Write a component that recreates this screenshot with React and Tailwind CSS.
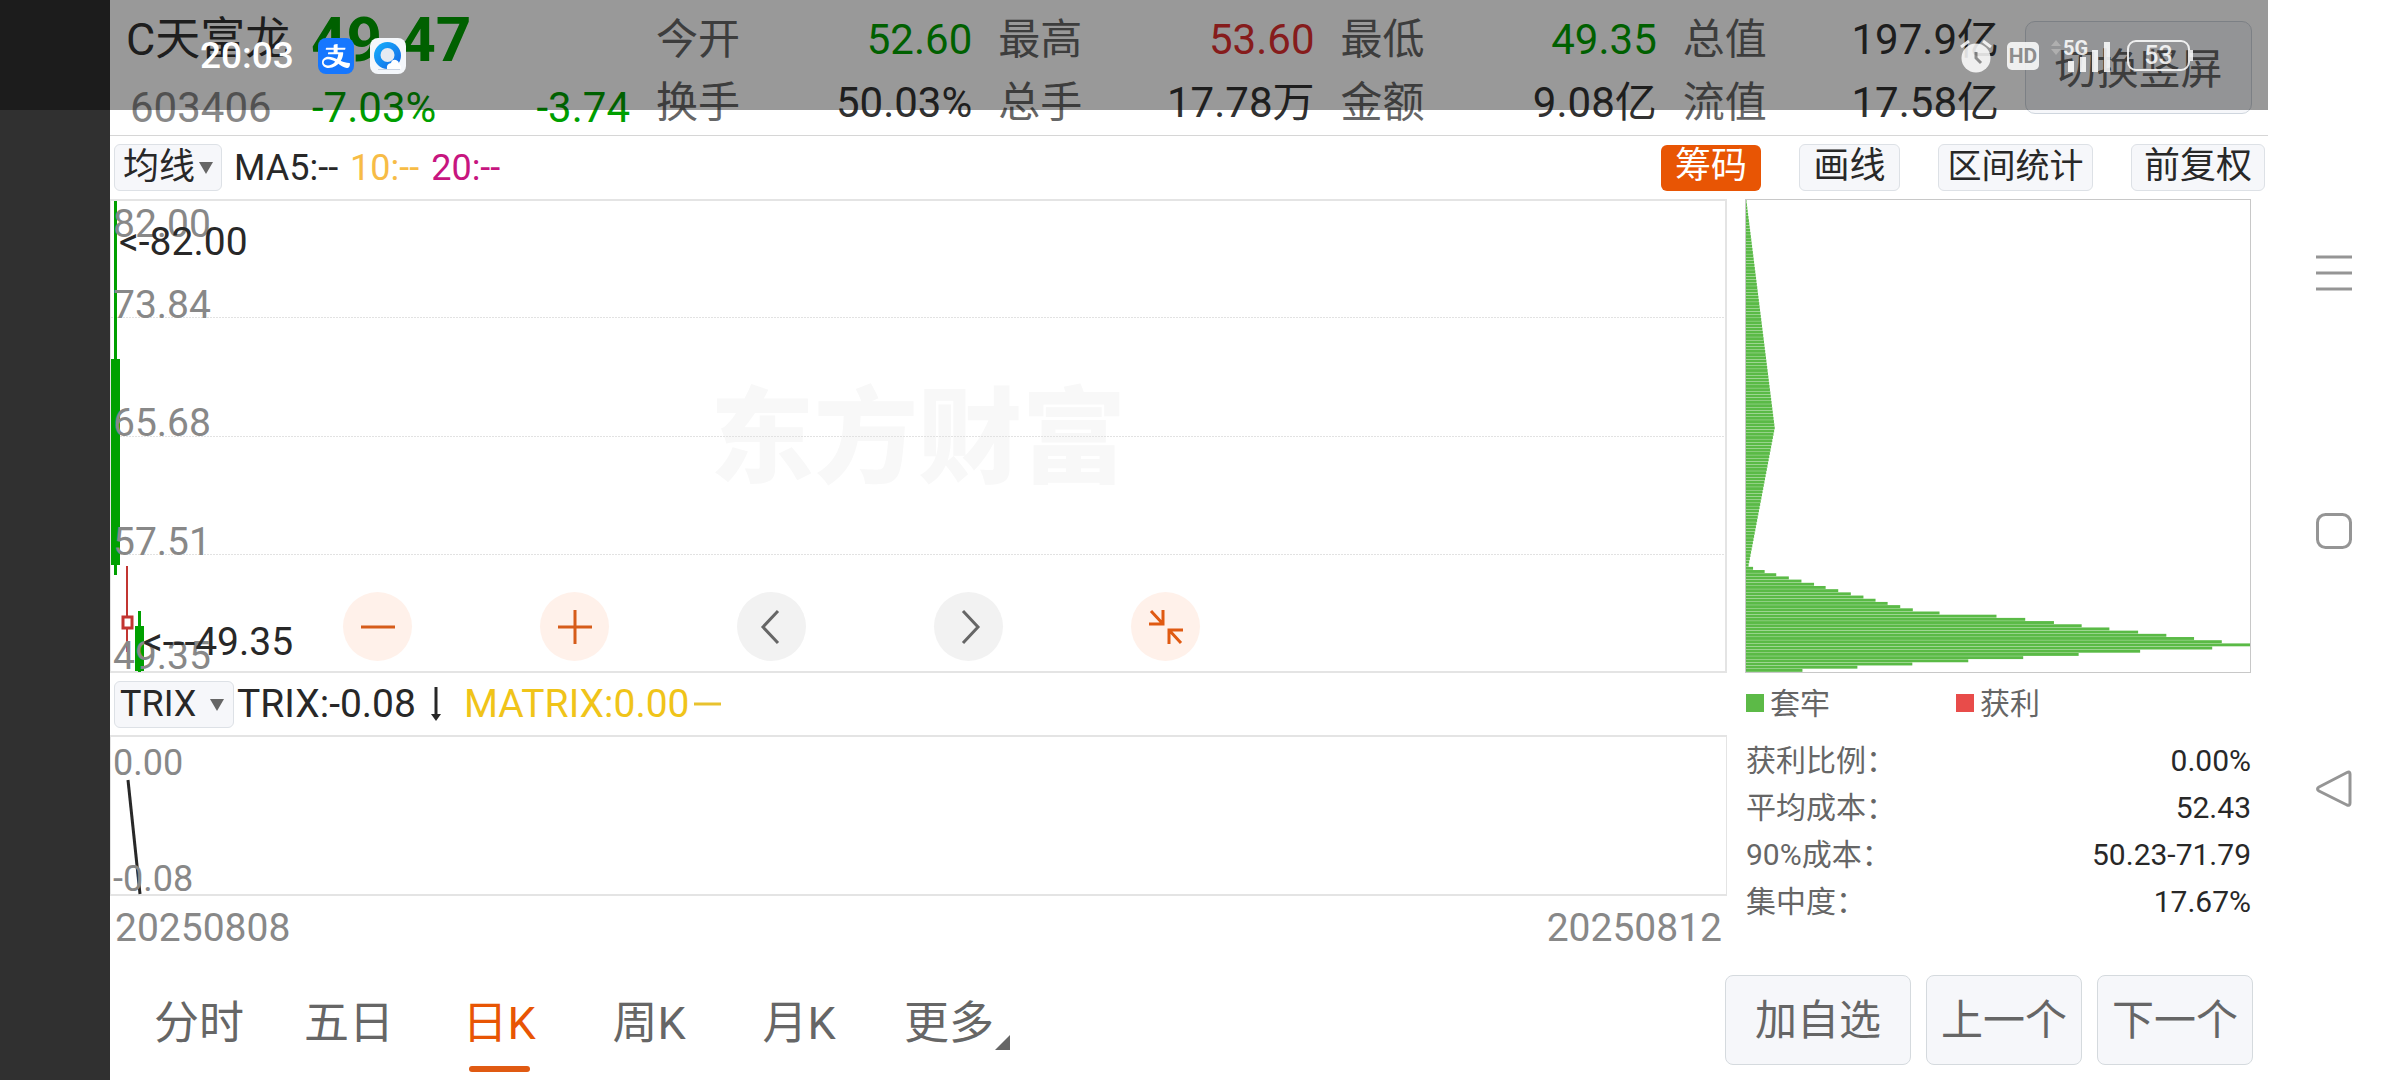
import { AiOutlineAlipay } from 'react-icons/ai';

const quotes = [
  { label: '今开', value: '52.60', color: 'text-[#00a000]' },
  { label: '最高', value: '53.60', color: 'text-[#e03030]' },
  { label: '最低', value: '49.35', color: 'text-[#00a000]' },
  { label: '总值', value: '197.9亿', color: 'text-[#333333]' },
  { label: '换手', value: '50.03%', color: 'text-[#333333]' },
  { label: '总手', value: '17.78万', color: 'text-[#333333]' },
  { label: '金额', value: '9.08亿', color: 'text-[#333333]' },
  { label: '流值', value: '17.58亿', color: 'text-[#333333]' },
];

const stats = [
  { label: '获利比例：', value: '0.00%' },
  { label: '平均成本：', value: '52.43' },
  { label: '90%成本：', value: '50.23-71.79' },
  { label: '集中度：', value: '17.67%' },
];

const periods = ['分时', '五日', '日K', '周K', '月K', '更多'];

// share of the widest row, in percent, for the dense area at the bottom
const denseRows = [
  1.4, 3.7, 6, 8.5, 11, 13.5, 15.8, 18.3, 20.8, 23.3, 25.7, 28.1, 30.6, 33.1,
  38.4, 49.7, 55.4, 61.1, 66.6, 72.1, 77.8, 83.4, 88.9, 94.4, 100, 92.5, 78.2,
  66, 55, 44.1, 33, 22.1, 11.2,
];
const sparseRows = Array.from({ length: 115 }, (_, i) =>
  i <= 71 ? 0.1 + (i / 71) * 5.6 : 5.7 - ((i - 71) / 44) * 5.3
);
const chipRows = [...sparseRows, ...denseRows];

function StatusBar() {
  return (
    <div className="absolute top-0 left-0 right-[132px] h-[110px] bg-black/40 flex items-center justify-between pt-px pl-[200px] pr-[75px] text-white pointer-events-none">
      <div className="flex items-center">
        <span className="text-[37px] leading-[40px] font-medium">20:03</span>
        <span className="ml-6 size-9 rounded-lg bg-[#1677ff] flex items-center justify-center">
          <AiOutlineAlipay className="size-8" />
        </span>
        <svg className="ml-4 size-9" viewBox="0 0 36 36">
          <defs>
            <linearGradient id="ring" x1="0" y1="0" x2="1" y2="1">
              <stop offset="0" stopColor="#17b2fb" />
              <stop offset="1" stopColor="#1464e6" />
            </linearGradient>
          </defs>
          <rect width="36" height="36" rx="8" fill="#f4f7fb" />
          <circle cx="17.500" cy="17.500" r="13.500" fill="url(#ring)" />
          <circle cx="17.500" cy="17" r="7" fill="#e6eaf2" />
          <path d="M17 31q-1-5 4-6 1-4 5-3 3 1 3 4 3 2 2 5z" fill="#fff" />
          <path d="M8 31.500h22" stroke="#c9d3e2" strokeWidth="1" />
        </svg>
      </div>
      <div className="flex items-center opacity-85">
        <svg className="w-[32px] h-[36px]" viewBox="0 0 32 36">
          <circle cx="16" cy="20" r="14.500" fill="#fff" />
          <path d="M1 9l8-6M31 9l-8-6" stroke="#fff" strokeWidth="3" />
          <path d="M16 14v6l5 5" fill="none" stroke="#8c8c8c" strokeWidth="3" />
        </svg>
        <span className="ml-[15px] w-8 h-7 rounded-[5px] bg-white text-[#8c8c8c] text-[21px] leading-[28px] font-bold text-center">
          HD
        </span>
        <svg className="ml-3 w-[62px] h-[36px] overflow-visible" viewBox="0 0 62 36">
          <path d="M0 8l5-6 5 6zM0 11h10l-5 6z" fill="#b4b4b4" />
          <text x="12" y="17" fontSize="20" fontWeight="700" fill="#fff">5G</text>
          <path d="M17 23h6v11h-6zM29 19h6v15h-6zM41 12h6v22h-6zM53 4h6v30h-6z" fill="#fff" />
        </svg>
        <span className="ml-[14px] w-[63px] h-[31px] rounded-[9px] border-2 border-white text-[25px] leading-[28px] font-medium text-center">
          53
        </span>
        <span className="w-[3px] h-[11px] bg-white" />
      </div>
    </div>
  );
}

function Header() {
  return (
    <header className="h-[136px] border-b border-[#d6d6d6] flex gap-[26px] pl-4 pr-4 text-[42px]">
      <div className="w-[504px] shrink-0 pt-2">
        <div className="h-[63px] flex items-center">
          <h1 className="w-[185px] text-[45px] leading-[60px] text-[#333333] whitespace-nowrap">C天富龙</h1>
          <strong className="text-[62px] leading-[60px] font-bold text-[#00a000]">49.47</strong>
        </div>
        <div className="h-[73px] flex items-center text-[#00a000]">
          <span className="w-[186px] pl-1 text-[#888888]">603406</span>
          <span>-7.03%</span>
          <span className="ml-auto">-3.74</span>
        </div>
      </div>
      <dl className="flex-1 grid grid-cols-4 gap-x-[26px] pt-2 auto-rows-[63px]">
        {quotes.map((q) => (
          <div key={q.label} className="flex items-center justify-between">
            <dt className="text-[#666666]">{q.label}</dt>
            <dd className={q.color}>{q.value}</dd>
          </div>
        ))}
      </dl>
      <button className="mt-[21px] w-[227px] h-[93px] pt-1 shrink-0 rounded-[10px] border border-[#cfd6de] bg-[#f6f7fa] text-[#666666]">
        切换竖屏
      </button>
    </header>
  );
}

function Picker({ label, value, className, arrow }) {
  return (
    <div className="relative">
      <select
        aria-label={label}
        defaultValue={value}
        className={`appearance-none h-[47px] rounded-md border border-[#dde1e6] bg-[#f6f7fa] text-[36px] leading-[45px] text-[#282828] ${className}`}
      >
        <option>{value}</option>
      </select>
      <svg className={`absolute top-[18px] w-[14px] h-3 pointer-events-none ${arrow}`} viewBox="0 0 14 12">
        <path d="M0 0h14L7 12z" fill="#666666" />
      </svg>
    </div>
  );
}

function Toolbar() {
  const tool = 'h-[47px] rounded-md border border-[#dde1e6] bg-[#f6f7fa] leading-[40px] text-[#282828]';
  return (
    <div className="h-[63px] flex items-center pl-1 pr-[3px] text-[36px]">
      <Picker label="主图指标" value="均线" className="block w-[108px] pl-2" arrow="right-[9px]" />
      <span className="ml-3 text-[#282828]">MA5:--</span>
      <span className="ml-3 text-[#f7bc46]">10:--</span>
      <span className="ml-3 text-[#c7157f]">20:--</span>
      <div className="ml-auto flex items-center gap-[38px]">
        <button className="w-[100px] h-[46px] pb-1 rounded-md bg-[#e85504] leading-[40px] text-white">筹码</button>
        <button className={`w-[101px] pb-1 ${tool}`}>画线</button>
        <button className={`w-[155px] pb-1 text-[34px] ${tool}`}>区间统计</button>
        <button className={`w-[134px] pb-1 ${tool}`}>前复权</button>
      </div>
    </div>
  );
}

function ZoomControls() {
  const warm = 'size-[69px] rounded-full bg-[#fff1ea] flex items-center justify-center';
  const cool = 'size-[69px] rounded-full bg-[#f2f2f2] flex items-center justify-center';
  return (
    <div className="absolute left-[232px] bottom-[10px] flex gap-32">
      <button className={warm} aria-label="缩小">
        <svg className="size-9" viewBox="0 0 36 36">
          <path d="M1 18h34" stroke="#d65c1a" strokeWidth="3" />
        </svg>
      </button>
      <button className={warm} aria-label="放大">
        <svg className="size-9" viewBox="0 0 36 36">
          <path d="M1 18h34M18 1v34" stroke="#d65c1a" strokeWidth="3" />
        </svg>
      </button>
      <button className={cool} aria-label="左移">
        <svg className="size-9" viewBox="0 0 36 36">
          <path d="M24 2L9 18l15 16" fill="none" stroke="#666666" strokeWidth="3" />
        </svg>
      </button>
      <button className={cool} aria-label="右移">
        <svg className="size-9" viewBox="0 0 36 36">
          <path d="M12 2l15 16-15 16" fill="none" stroke="#666666" strokeWidth="3" />
        </svg>
      </button>
      <button className={warm} aria-label="收起">
        <svg className="size-9" viewBox="0 0 36 36">
          <path d="M3 2l12 13M15 1v14H1M33 34L21 21M21 35V21h14" fill="none" stroke="#e05a12" strokeWidth="3" />
        </svg>
      </button>
    </div>
  );
}

function PriceChart() {
  return (
    <div className="relative h-[474px] border-2 border-l border-[#e4e4e4]">
      <svg className="absolute inset-0 w-full h-full overflow-visible text-[39px]">
        <text x="50%" y="274" textAnchor="middle" fontSize="104" fontWeight="900" fill="#f8f8f8">
          东方财富
        </text>
        <g stroke="#e2e2e2" strokeWidth="1" strokeDasharray="2 1">
          <line x1="0" x2="100%" y1="116.500" y2="116.500" />
          <line x1="0" x2="100%" y1="235.500" y2="235.500" />
          <line x1="0" x2="100%" y1="353.500" y2="353.500" />
        </g>
        <g fill="#00a000">
          <rect x="3" y="0" width="3" height="374" />
          <rect x="0" y="158" width="9" height="206" />
          <rect x="27" y="410" width="3" height="61" />
          <rect x="24" y="425" width="9" height="45" />
        </g>
        <g fill="none" stroke="#c23531" strokeWidth="2">
          <path d="M16 365v50M16 427v24" />
          <rect x="12" y="416" width="9" height="11" strokeWidth="3" />
        </g>
        <g fill="#888888">
          <text x="2" y="36">82.00</text>
          <text x="2" y="117">73.84</text>
          <text x="2" y="235">65.68</text>
          <text x="2" y="354">57.51</text>
          <text x="2" y="468">49.35</text>
        </g>
        <g fill="#282828">
          <text x="8" y="54">&lt;-82.00</text>
          <text x="32" y="454">&lt;---49.35</text>
        </g>
      </svg>
      <ZoomControls />
    </div>
  );
}

function IndicatorBar() {
  return (
    <div className="h-[62px] flex items-center pl-1 text-[39px] text-[#282828]">
      <Picker label="副图指标" value="TRIX" className="block w-[120px] pl-[5px]" arrow="right-[10px]" />
      <span className="ml-[3px]">TRIX:-0.08</span>
      <svg className="ml-[14px] w-3 h-[34px]" viewBox="0 0 12 34">
        <path d="M6 0v28" stroke="#282828" strokeWidth="3" />
        <path d="M1 27h10l-5 7z" fill="#282828" />
      </svg>
      <span className="ml-[22px] text-[#f0c419]">MATRIX:0.00</span>
      <svg className="ml-1 w-[27px] h-1" viewBox="0 0 27 4">
        <path d="M0 2h27" stroke="#e8c22e" strokeWidth="3" />
      </svg>
    </div>
  );
}

function TrixChart() {
  return (
    <div className="h-[161px] border-2 border-x border-[#e4e4e4]">
      <svg className="w-full h-full overflow-visible text-[36px]">
        <path d="M17 43l12 114" stroke="#282828" strokeWidth="3" />
        <text x="2" y="38" fill="#888888">0.00</text>
        <text x="2" y="154" fill="#888888">-0.08</text>
      </svg>
    </div>
  );
}

function ChipPanel() {
  return (
    <section className="w-[506px] shrink-0 text-[30px] text-[#666666]">
      <div className="h-[474px] border border-[#c8c8c8]">
        <svg className="w-full h-full">
          <g fill="#5aba46">
            {chipRows.map((w, i) => (
              <rect key={i} x="0" y={i * 3.19} width={`${w}%`} height="2.900" />
            ))}
          </g>
        </svg>
      </div>
      <div className="h-[60px] flex items-center pl-px">
        <span className="size-[18px] bg-[#5cba47]" />
        <span className="ml-[6px] w-[186px]">套牢</span>
        <span className="size-[18px] bg-[#e84c4a]" />
        <span className="ml-[6px]">获利</span>
      </div>
      <dl className="pt-1">
        {stats.map((s) => (
          <div key={s.label} className="h-[47px] flex items-center justify-between pl-px">
            <dt>{s.label}</dt>
            <dd className="text-[#282828]">{s.value}</dd>
          </div>
        ))}
      </dl>
    </section>
  );
}

function BottomBar() {
  const action = 'h-[90px] rounded-lg border border-[#d5dade] bg-[#f6f7fa]';
  return (
    <footer className="h-[120px] flex items-center pl-[14px] pr-[15px] text-[#666666]">
      <nav className="flex self-stretch text-[45px]">
        {periods.map((p) => (
          <button
            key={p}
            className={`relative w-[150px] h-full pt-2 ${p === '日K' ? 'text-[#e85504]' : ''}`}
          >
            {p}
            {p === '日K' && (
              <span className="absolute bottom-2 left-[45px] w-[61px] h-[6px] rounded-full bg-[#e05a12]" />
            )}
            {p === '更多' && (
              <svg className="absolute right-[14px] bottom-[30px] size-[15px]" viewBox="0 0 15 15">
                <path d="M15 0v15H0z" fill="#666666" />
              </svg>
            )}
          </button>
        ))}
      </nav>
      <div className="ml-auto flex gap-[15px] text-[42px]">
        <button className={`w-[186px] ${action}`}>加自选</button>
        <button className={`w-[156px] ${action}`}>上一个</button>
        <button className={`w-[156px] ${action}`}>下一个</button>
      </div>
    </footer>
  );
}

function SystemNav() {
  return (
    <nav className="w-[132px] shrink-0 flex flex-col items-center gap-[218px] pt-[253px]">
      <button className="block" aria-label="最近任务">
        <svg className="size-10" viewBox="0 0 40 40" stroke="#959595" strokeWidth="3">
          <path d="M2 4h36M2 20h36M2 36h36" />
        </svg>
      </button>
      <button className="block" aria-label="主屏幕">
        <svg className="size-10" viewBox="0 0 40 40" fill="none" stroke="#959595" strokeWidth="3">
          <rect x="3.500" y="3.500" width="33" height="33" rx="8" />
        </svg>
      </button>
      <button className="block" aria-label="返回">
        <svg className="size-10" viewBox="0 0 40 40" fill="none" stroke="#959595" strokeWidth="3" strokeLinejoin="round">
          <path d="M33 3.500Q36 2 36 5v29q0 3-3 2L5 22q-3-2 0-4z" />
        </svg>
      </button>
    </nav>
  );
}

export default function App() {
  return (
    <div className="relative min-h-screen flex bg-white font-[Roboto,'Noto_Sans_CJK_SC',sans-serif]">
      <div className="w-[110px] shrink-0 bg-[#303030]" />
      <main className="flex-1 min-w-0">
        <Header />
        <Toolbar />
        <div className="flex gap-[18px] pr-[17px]">
          <div className="flex-1 min-w-0">
            <PriceChart />
            <IndicatorBar />
            <TrixChart />
            <div className="h-[64px] flex items-center justify-between px-[5px] text-[39px] text-[#888888]">
              <span>20250808</span>
              <span>20250812</span>
            </div>
          </div>
          <ChipPanel />
        </div>
        <BottomBar />
      </main>
      <SystemNav />
      <StatusBar />
    </div>
  );
}
